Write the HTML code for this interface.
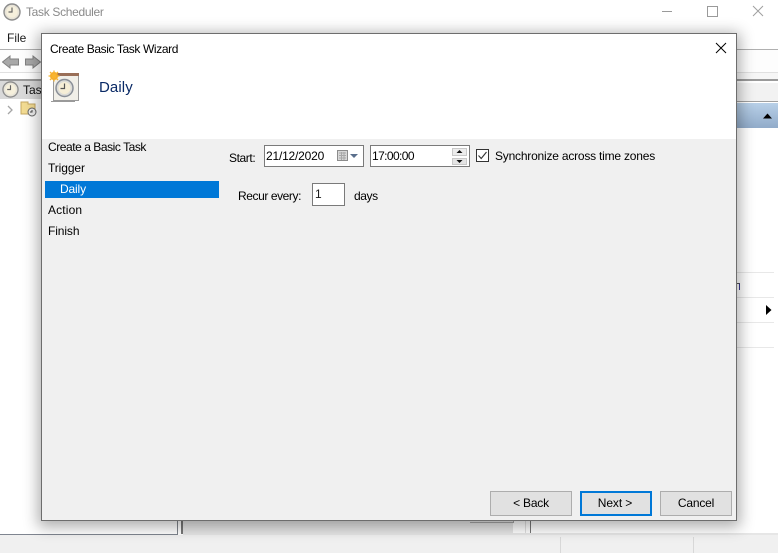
<!DOCTYPE html>
<html><head><meta charset="utf-8"><style>
html,body{margin:0;padding:0;width:778px;height:553px;overflow:hidden;background:#fff}
body{position:relative;font:12px "Liberation Sans",sans-serif;color:#000}
.a{position:absolute}
.t{position:absolute;white-space:nowrap;line-height:16px}
.btn{position:absolute;box-sizing:border-box;height:25px;background:#e1e1e1;border:1px solid #adadad;text-align:center;line-height:23px}
.in{position:absolute;box-sizing:border-box;background:#fff;border:1px solid #7a7a7a}
</style></head><body>
<!-- background window -->
<svg class="a" style="left:3px;top:3px" width="18" height="18" viewBox="0 0 18 18"><circle cx="9" cy="9" r="8" fill="#e8e4d8" stroke="#8c8c8c" stroke-width="1.4"/><circle cx="9" cy="9" r="5.6" fill="#f6f0dc"/><path d="M9 4.5V9H5.5" fill="none" stroke="#666" stroke-width="1.2"/></svg>
<div class="t" style="left:26px;top:4px;color:#8a8a8a;font-size:12px;letter-spacing:-.32px">Task Scheduler</div>
<div class="a" style="left:662px;top:11px;width:10px;height:1px;background:#9a9a9a"></div>
<div class="a" style="left:707px;top:6px;width:9px;height:9px;border:1px solid #9a9a9a"></div>
<svg class="a" style="left:752px;top:5px" width="12" height="12"><path d="M1 1L11 11M11 1L1 11" stroke="#a0a0a0" fill="none"/></svg>
<div class="t" style="left:7px;top:30px;color:#1a1a1a">File</div>
<div class="a" style="left:0;top:49px;width:778px;height:1px;background:#b0b0b0"></div>
<div class="a" style="left:0;top:50px;width:778px;height:22px;background:#fdfdfd"></div>
<svg class="a" style="left:2px;top:54px" width="39" height="16"><path d="M0.500 8L8 2V5H16.500V11H8V14Z" fill="#a8a8a8" stroke="#808080"/><path d="M38.500 8L31 2V5H23.500V11H31V14Z" fill="#a8a8a8" stroke="#808080"/></svg>
<div class="a" style="left:0;top:72px;width:778px;height:1px;background:#e0e0e0"></div>
<div class="a" style="left:0;top:79px;width:778px;height:2px;background:#9a9a9a"></div>
<div class="a" style="left:0;top:81px;width:41px;height:18px;background:#d9d9d9"></div>
<svg class="a" style="left:2px;top:81px" width="17" height="17" viewBox="0 0 18 18"><circle cx="9" cy="9" r="8" fill="#e8e4d8" stroke="#8c8c8c" stroke-width="1.4"/><circle cx="9" cy="9" r="5.600" fill="#f6f0dc"/><path d="M9 4.500V9H5.500" fill="none" stroke="#666" stroke-width="1.200"/></svg>
<div class="t" style="left:23px;top:82px;color:#111">Tas</div>
<svg class="a" style="left:6px;top:105px" width="8" height="10"><path d="M2 1L6 5L2 9" fill="none" stroke="#a6a6a6" stroke-width="1.300"/></svg>
<svg class="a" style="left:20px;top:100px" width="18" height="17"><path d="M1 2H8V4H15V14H1Z" fill="#f3dc93" stroke="#c6a862"/><circle cx="12" cy="12" r="4" fill="#eee" stroke="#666"/><path d="M12 10V12H10" stroke="#444" fill="none"/></svg>
<!-- right pane bits -->
<div class="a" style="left:737px;top:73px;width:41px;height:6px;background:#f6f6f6"></div>
<div class="a" style="left:737px;top:83px;width:41px;height:18px;background:#f2f2f2"></div>
<div class="a" style="left:737px;top:101px;width:41px;height:1px;background:#a0a0a0"></div>
<div class="a" style="left:737px;top:103px;width:41px;height:25px;background:linear-gradient(180deg,#b8d0e8,#91abc9)"></div>
<svg class="a" style="left:763px;top:113px" width="10" height="6"><path d="M0 5.500L4.500 0.500L9 5.500Z" fill="#000"/></svg>
<div class="a" style="left:737px;top:272px;width:37px;height:1px;background:#e8e8e8"></div>
<div class="a" style="left:737px;top:297px;width:37px;height:1px;background:#e8e8e8"></div>
<div class="a" style="left:737px;top:322px;width:37px;height:1px;background:#e8e8e8"></div>
<div class="a" style="left:737px;top:347px;width:37px;height:1px;background:#e8e8e8"></div>
<div class="a" style="left:737px;top:283px;width:2px;height:6px;border-top:1px solid #555;border-right:1px solid #3a3a90"></div>
<svg class="a" style="left:766px;top:304px" width="7" height="12"><path d="M0 1L5.500 6L0 11Z" fill="#000"/></svg>
<!-- bottom frame -->
<div class="a" style="left:0;top:534px;width:178px;height:1px;background:#7f8590"></div>
<div class="a" style="left:177px;top:520px;width:1px;height:15px;background:#80858c"></div>
<div class="a" style="left:181px;top:520px;width:2px;height:14px;background:#777"></div>
<div class="a" style="left:183px;top:521px;width:330px;height:12px;background:#e6e6e6"></div>
<div class="a" style="left:470px;top:522px;width:43px;height:1px;background:#a8a8a8"></div>
<div class="a" style="left:513px;top:521px;width:1px;height:2px;background:#a8a8a8"></div>
<div class="a" style="left:525px;top:521px;width:1px;height:12px;background:#e0e0e0"></div>
<div class="a" style="left:530px;top:521px;width:1px;height:12px;background:#777"></div>
<div class="a" style="left:183px;top:533px;width:595px;height:2px;background:#e6e6e6"></div>
<div class="a" style="left:0;top:535px;width:778px;height:18px;background:#f0f0f0"></div>
<div class="a" style="left:560px;top:537px;width:1px;height:16px;background:#d8d8d8"></div>
<div class="a" style="left:693px;top:537px;width:1px;height:16px;background:#d8d8d8"></div>
<!-- dialog -->
<div class="a" style="left:41px;top:33px;width:696px;height:488px;box-sizing:border-box;border:1px solid #6d6d6d;background:#f0f0f0;box-shadow:0 3px 14px 3px rgba(0,0,0,.32)">
<div class="a" style="left:0;top:0;width:694px;height:105px;background:#fff"></div>
</div>
<div class="t" style="left:50px;top:41px;letter-spacing:-.38px">Create Basic Task Wizard</div>
<svg class="a" style="left:715px;top:42px" width="12" height="12"><path d="M1 1L11 11M11 1L1 11" stroke="#000" fill="none"/></svg>
<svg class="a" style="left:47px;top:70px" width="34" height="33" viewBox="0 0 34 33">
<path d="M6.500 4.500H31.500V30.500H6.500Z" fill="#f1efe8" stroke="#9a9a9a"/><path d="M4 31.500H28" stroke="#9a9a9a"/>
<rect x="8" y="3" width="24" height="3" fill="#9a6f58"/>
<circle cx="17.500" cy="18" r="8.500" fill="#dcdcd8" stroke="#8a8f98" stroke-width="1.500"/><circle cx="17.500" cy="18" r="6" fill="#f6eed6"/><path d="M17.500 13.500V18.500H13.500" fill="none" stroke="#555" stroke-width="1.200"/>
<circle cx="7" cy="6" r="4" fill="#f5a623"/><path d="M7 0.500V11.500M1.500 6H12.500M3 2L11 10M11 2L3 10" stroke="#f8b52e" stroke-width="1.300"/>
</svg>
<div class="t" style="left:99px;top:79px;font-size:15px;line-height:18px;color:#0a2a66;letter-spacing:.1px">Daily</div>
<!-- left nav -->
<div class="t" style="left:48px;top:139px;letter-spacing:-.45px">Create a Basic Task</div>
<div class="t" style="left:48px;top:160px;letter-spacing:-.1px">Trigger</div>
<div class="a" style="left:45px;top:181px;width:174px;height:17px;background:#0078d7"></div>
<div class="t" style="left:60px;top:181px;color:#fff;letter-spacing:-.15px">Daily</div>
<div class="t" style="left:48px;top:202px;letter-spacing:.15px">Action</div>
<div class="t" style="left:48px;top:223px;letter-spacing:-.1px">Finish</div>
<!-- form -->
<div class="t" style="left:229px;top:150px;letter-spacing:-.4px">Start:</div>
<div class="in" style="left:264px;top:145px;width:100px;height:22px"></div>
<div class="t" style="left:266px;top:148px;letter-spacing:-.2px">21/12/2020</div>
<svg class="a" style="left:337px;top:149px" width="22" height="14"><rect x="0.500" y="1.500" width="10" height="10" fill="#d8d8d8" stroke="#8c8c8c"/><path d="M2 4H9M2 6.500H9M2 9H9M4.500 3V11M7 3V11" stroke="#a8a8a8"/><path d="M13 5H21L17 9Z" fill="#5a6f8c"/></svg>
<div class="in" style="left:370px;top:145px;width:100px;height:22px"></div>
<div class="t" style="left:372px;top:148px;letter-spacing:-.6px">17:00:00</div>
<div class="a" style="left:452px;top:148px;width:15px;height:8px;box-sizing:border-box;background:#ececec;border:1px solid #c8c8c8"></div>
<div class="a" style="left:452px;top:158px;width:15px;height:7px;box-sizing:border-box;background:#e4e4e4;border:1px solid #c8c8c8"></div>
<svg class="a" style="left:452px;top:147px" width="15" height="18"><path d="M4.500 6L7.500 3L10.500 6Z M4.500 13L7.500 16L10.500 13Z" fill="#111"/></svg>
<div class="in" style="left:476px;top:149px;width:13px;height:13px;border-color:#333"></div>
<svg class="a" style="left:476px;top:149px" width="13" height="13"><path d="M2.500 6.500L5.200 9.500L10.500 3" fill="none" stroke="#333" stroke-width="1.100"/></svg>
<div class="t" style="left:495px;top:148px;letter-spacing:-.21px">Synchronize across time zones</div>
<div class="t" style="left:238px;top:188px;letter-spacing:-.42px">Recur every:</div>
<div class="in" style="left:312px;top:183px;width:33px;height:23px"></div>
<div class="t" style="left:315px;top:186px;color:#1a1a1a">1</div>
<div class="t" style="left:354px;top:188px;letter-spacing:-.4px">days</div>
<!-- buttons -->
<div class="btn" style="left:490px;top:491px;width:82px;letter-spacing:-.2px">&lt; Back</div>
<div class="btn" style="left:580px;top:491px;width:72px;border:2px solid #0078d7;line-height:21px;letter-spacing:-.1px;padding-right:2px">Next &gt;</div>
<div class="btn" style="left:660px;top:491px;width:72px;letter-spacing:-.2px">Cancel</div>
</body></html>
